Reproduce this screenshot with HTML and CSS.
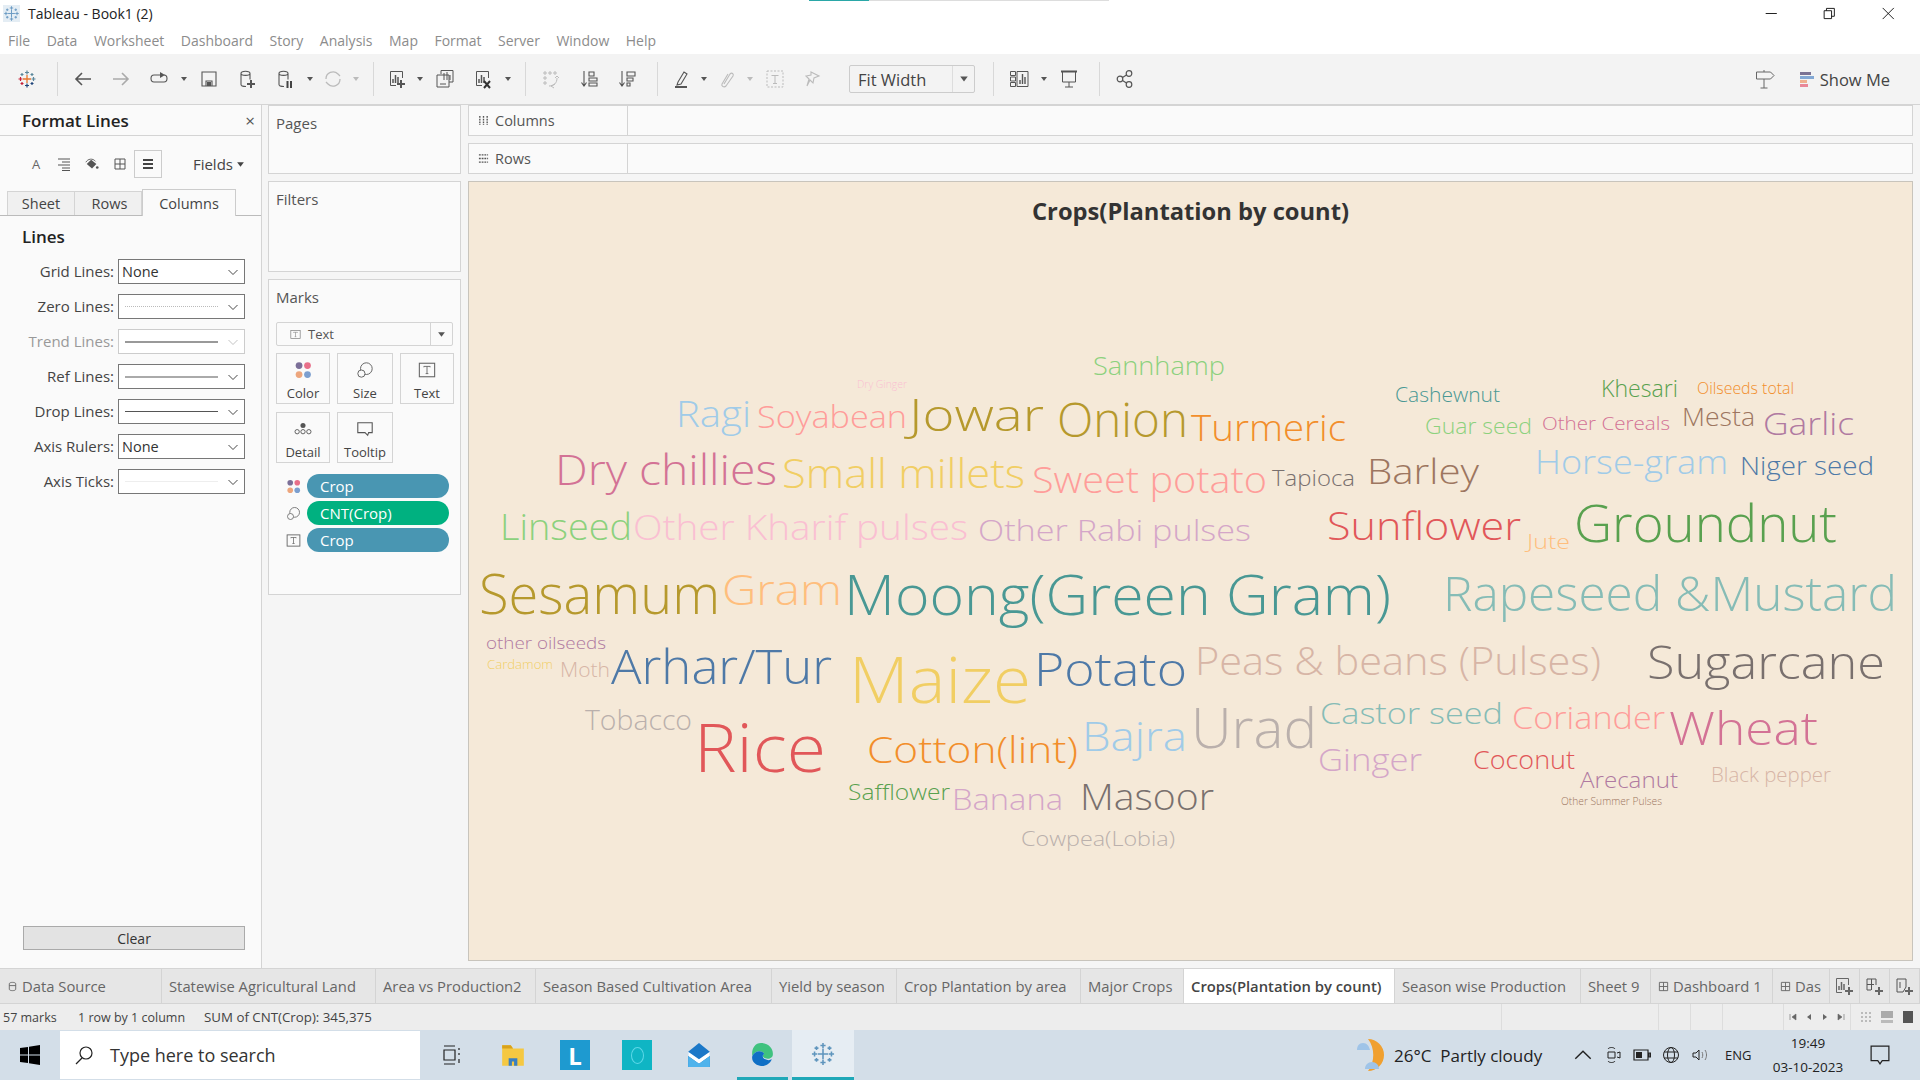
FILE: index.html
```html
<!DOCTYPE html>
<html lang="en">
<head>
  <meta charset="UTF-8" />
  <title>Tableau - Book1 (2)</title>
  <link rel="stylesheet" href="styles.css">
</head>
<body>
  <svg class="defs" width="0" height="0">
    <symbol id="snow" viewBox="0 0 20 20">
      <path d="M10 6v8M6 10h8M10 1.500v4M8 3.500h4M10 14.500v4M8 16.500h4M1.500 10h4M3.500 8v4M14.500 10h4M16.500 8v4M5 4v3M3.500 5.500h3M15 4v3M13.500 5.500h3M5 13v3M3.500 14.500h3M15 13v3M13.500 14.500h3" fill="none" stroke="currentColor" stroke-width="1.200"/>
    </symbol>
    <symbol id="caret" viewBox="0 0 8 8"><path d="M1 2h6L4 6z" fill="currentColor"/></symbol>
    <symbol id="chev" viewBox="0 0 12 8"><path d="M1.500 2l4.500 4.500L10.500 2" fill="none" stroke="currentColor" stroke-width=".9"/></symbol>
    <symbol id="chart" viewBox="0 0 20 20"><path d="M15.500 9V2.500h-12v14H9" fill="none" stroke="currentColor"/><path d="M6 14v-4M8.500 14V6M11 14v-6" fill="none" stroke="currentColor" stroke-width="1.500"/></symbol>
    <symbol id="plus" viewBox="0 0 20 20"><path d="M14 11v8M10 15h8" fill="none" stroke="currentColor" stroke-width="2"/></symbol>
    <symbol id="db" viewBox="0 0 20 20"><path d="M4 4.500c0-3 9-3 9 0v6M4 4.500c0 2.500 9 2.500 9 0M4 4.500v11c0 1.500 2 2 5 2" fill="none" stroke="currentColor" stroke-width="1.100"/></symbol>
    <symbol id="four-dots" viewBox="0 0 16 16">
      <circle cx="4.500" cy="4" r="3" fill="#7b6f98"/><circle cx="12" cy="4" r="3" fill="#e8708a"/>
      <circle cx="4.500" cy="12" r="3" fill="#eda67d"/><circle cx="12" cy="12" r="3" fill="#7c9fcf"/>
    </symbol>
    <symbol id="size" viewBox="0 0 20 20"><circle cx="11.500" cy="8.500" r="6.500" fill="none" stroke="currentColor" stroke-width="1.100"/><circle cx="6" cy="14" r="4" fill="#fafafa" stroke="currentColor" stroke-width="1.100"/></symbol>
    <symbol id="tbox" viewBox="0 0 20 20"><rect x="1.500" y="2.500" width="17" height="15" fill="none" stroke="currentColor" stroke-width="1.200"/><path d="M6.500 7V6h7v1M10 6v8M8.500 14h3" fill="none" stroke="currentColor"/></symbol>
  </svg>

  <div class="progress"></div>

  <div class="title-bar">
    <svg class="app-icon"><use href="#snow"/></svg>
    <span class="app-title">Tableau - Book1 (2)</span>
    <div class="win-ctrls">
      <svg viewBox="0 0 14 14"><path d="M1 7h12" stroke="#111" fill="none"/></svg>
      <svg viewBox="0 0 14 14"><path d="M1.500 4h8v8.500h-8zM4 4V1.500h8.500V10H9.500" stroke="#111" fill="none"/></svg>
      <svg viewBox="0 0 14 14"><path d="M1 1l12 12M13 1L1 13" stroke="#111" fill="none"/></svg>
    </div>
  </div>

  <nav class="menu-bar">
    <span>File</span><span>Data</span><span>Worksheet</span><span>Dashboard</span><span>Story</span><span>Analysis</span><span>Map</span><span>Format</span><span>Server</span><span>Window</span><span>Help</span>
  </nav>

  <div class="toolbar">
    <div class="tool">
      <svg viewBox="0 0 20 20">
        <path d="M10 6v8M6 10h8" stroke="#e8762c" fill="none" stroke-width="1.300"/>
        <path d="M10 1.500v4M8 3.500h4M16.500 8v4M14.500 10h4" stroke="#5b879b" fill="none" stroke-width="1.200"/>
        <path d="M10 14.500v4M8 16.500h4M15 13v3M13.500 14.500h3" stroke="#1f447b" fill="none" stroke-width="1.200"/>
        <path d="M1.500 10h4M3.500 8v4M5 13v3M3.500 14.500h3" stroke="#c72037" fill="none" stroke-width="1.200"/>
        <path d="M5 4v3M3.500 5.500h3M15 4v3M13.500 5.500h3" stroke="#59879b" fill="none" stroke-width="1.200"/>
      </svg>
    </div>
    <i class="sep"></i>
    <div class="tool"><svg viewBox="0 0 20 20"><path d="M18 10H3M9 4l-6 6 6 6" fill="none" stroke="#555" stroke-width="1.600"/></svg></div>
    <div class="tool off"><svg viewBox="0 0 20 20"><path d="M2 10h15M11 4l6 6-6 6" fill="none" stroke="#aaa" stroke-width="1.600"/></svg></div>
    <div class="tool"><svg viewBox="0 0 20 20"><path d="M13 6H5c-4 0-4 7 0 7h10c4 0 4-7 0-7" fill="none" stroke="#555" stroke-width="1.100"/><path d="M11 3l5 3-5 3z" fill="#555"/></svg></div>
    <svg class="caret"><use href="#caret"/></svg>
    <div class="tool"><svg viewBox="0 0 20 20"><path d="M3 3h14v14H3zM7 17v-5h6v5" fill="none" stroke="#555" stroke-width="1.100"/><path d="M8 13h4v4H8z" fill="#555"/></svg></div>
    <div class="tool"><svg><use href="#db"/></svg><svg class="badge"><use href="#plus"/></svg></div>
    <div class="tool"><svg><use href="#db"/></svg><svg class="badge" viewBox="0 0 20 20"><path d="M12.500 12v7M16 12v7" stroke="#444" stroke-width="2" fill="none"/></svg></div>
    <svg class="caret"><use href="#caret"/></svg>
    <div class="tool narrow off"><svg viewBox="0 0 20 20"><path d="M3 10a7 7 0 0 1 12-5l2 2M17 10a7 7 0 0 1-12 5l-2-2" fill="none" stroke="#bbb" stroke-width="1.300"/></svg></div>
    <svg class="caret off"><use href="#caret"/></svg>
    <i class="sep"></i>
    <div class="tool narrow"><svg><use href="#chart"/></svg><svg class="badge"><use href="#plus"/></svg></div>
    <svg class="caret"><use href="#caret"/></svg>
    <div class="tool"><svg viewBox="0 0 20 20"><path d="M6 5V1.500h12V13h-4M2 6h12v12H2z" fill="none" stroke="#555"/><path d="M9 11V4M12 11V3M15 11V6M5 15h6" stroke="#555" fill="none"/></svg></div>
    <div class="tool"><svg><use href="#chart"/></svg><svg class="badge" viewBox="0 0 20 20"><path d="M11 12l6 7M17 12l-6 7" stroke="#333" stroke-width="2" fill="none"/></svg></div>
    <svg class="caret"><use href="#caret"/></svg>
    <i class="sep"></i>
    <div class="tool off"><svg viewBox="0 0 20 20"><path d="M3 3h2v2H3zM8 3h2v2H8zM13 3h2v2h-2zM3 8h2v2H3zM3 13h2v2H3zM8 17c5 0 8-3 8-8M14 15l-4 2 3 2M14 9l2-2 2 2" fill="none" stroke="#bbb"/></svg></div>
    <div class="tool"><svg viewBox="0 0 20 20"><path d="M5 2v14M2.500 13.500L5 17l2.500-3.500M10 3h5v4h-5zM10 9h8v3h-8zM10 14h8v3h-8z" fill="none" stroke="#555" stroke-width="1.100"/></svg></div>
    <div class="tool"><svg viewBox="0 0 20 20"><path d="M5 2v14M2.500 13.500L5 17l2.500-3.500M10 3h8v4h-8zM10 9h6v3h-6zM10 14h3v3h-3z" fill="none" stroke="#555" stroke-width="1.100"/></svg></div>
    <i class="sep"></i>
    <div class="tool narrow"><svg viewBox="0 0 20 20"><path d="M7 13L13 3l3 2-6 10-4 1z" fill="none" stroke="#555" stroke-width="1.100"/><path d="M4 18h12" stroke="#555" stroke-width="2" fill="none"/></svg></div>
    <svg class="caret"><use href="#caret"/></svg>
    <div class="tool narrow off"><svg viewBox="0 0 20 20"><path d="M7 15l6-10c2-2 4 0 3 2l-7 10c-2 2-5 0-4-2l6-10" fill="none" stroke="#bbb" stroke-width="1.100"/></svg></div>
    <svg class="caret off"><use href="#caret"/></svg>
    <div class="tool off"><svg viewBox="0 0 20 20"><rect x="2" y="2" width="16" height="16" fill="none" stroke="#bbb" stroke-dasharray="2 1.500"/><path d="M6.500 6.500h7M10 6.500v8M8 14.500h4" fill="none" stroke="#bbb"/></svg></div>
    <div class="tool off"><svg viewBox="0 0 20 20"><path d="M8 3l8 4-5 2-1 5-3-3-3 6 2-7-3-3 5-1z" fill="none" stroke="#bbb" stroke-width="1.100"/></svg></div>
    <div class="fit-box"><span class="fit-text">Fit Width</span><span class="fit-arrow"><svg><use href="#caret"/></svg></span></div>
    <i class="sep"></i>
    <div class="tool"><svg viewBox="0 0 20 20"><path d="M1.500 2.500h5v4h-5zM1.500 8h5v4h-5zM1.500 13.500h5v4h-5zM8 2.500h11v15H8z" fill="none" stroke="#555"/><path d="M11 15v-4M13.500 15V5M16 15V8" fill="none" stroke="#555" stroke-width="1.400"/></svg></div>
    <svg class="caret"><use href="#caret"/></svg>
    <div class="tool"><svg viewBox="0 0 20 20"><path d="M2 2.500h16" stroke="#555" stroke-width="2" fill="none"/><path d="M3.500 3v10h13V3M10 13v5M6 18h8" stroke="#555" fill="none"/></svg></div>
    <i class="sep"></i>
    <div class="tool"><svg viewBox="0 0 20 20"><circle cx="14" cy="4.500" r="2.800" fill="none" stroke="#555" stroke-width="1.200"/><circle cx="5" cy="10" r="2.800" fill="none" stroke="#555" stroke-width="1.200"/><circle cx="14" cy="15.500" r="2.800" fill="none" stroke="#555" stroke-width="1.200"/><path d="M7.500 8.500l4-2.500M7.500 11.500l4 2.500" stroke="#555" fill="none" stroke-width="1.200"/></svg></div>
    <div class="tool push"><svg viewBox="0 0 20 20"><path d="M1.500 3h14l3.500 3.500-3.500 3.500h-14zM9 3V1M9 10v9M5.500 19h7" fill="none" stroke="#666"/></svg></div>
    <div class="show-me">
      <span class="bars"><i class="b1"></i><i class="b2"></i><i class="b3"></i><i class="b4"></i></span>
      Show Me
    </div>
  </div>

  <main class="workspace">
    <section class="format-pane">
      <header class="pane-head"><span>Format Lines</span><span class="close">×</span></header>
      <div class="fmt-icons">
        <span class="fmt-icon"><span class="fmt-a">A</span></span>
        <span class="fmt-icon"><svg viewBox="0 0 14 14"><path d="M1 2h12M5 5h8M1 8h12M5 11h8M5 13.500h8" stroke="#555" fill="none"/></svg></span>
        <span class="fmt-icon"><svg viewBox="0 0 16 14"><path d="M2 7l5-5 6 5-5 5z" fill="#555"/><path d="M1 5c2-4 8-5 11-1" fill="none" stroke="#555"/><circle cx="14" cy="11" r="1.500" fill="#555"/></svg></span>
        <span class="fmt-icon"><svg viewBox="0 0 14 14"><path d="M2 2h10v10H2zM7 2v10M2 7h10" fill="none" stroke="#555"/></svg></span>
        <span class="fmt-icon selected"><svg viewBox="0 0 14 14"><path d="M2 3h10M2 7h10M2 11h10" stroke="#444" stroke-width="2" fill="none"/></svg></span>
        <span class="fields">Fields <svg><use href="#caret"/></svg></span>
      </div>
      <div class="fmt-tabs">
        <span class="fmt-tab tab-sheet">Sheet</span>
        <span class="fmt-tab tab-rows">Rows</span>
        <span class="fmt-tab tab-cols">Columns</span>
      </div>
      <h3 class="lines-title">Lines</h3>
      <div class="fmt-row"><label>Grid Lines:</label><div class="fmt-select">None<svg><use href="#chev"/></svg></div></div>
      <div class="fmt-row"><label>Zero Lines:</label><div class="fmt-select"><i class="line dotted"></i><svg><use href="#chev"/></svg></div></div>
      <div class="fmt-row disabled"><label>Trend Lines:</label><div class="fmt-select"><i class="line thick"></i><svg><use href="#chev"/></svg></div></div>
      <div class="fmt-row"><label>Ref Lines:</label><div class="fmt-select"><i class="line thick light"></i><svg><use href="#chev"/></svg></div></div>
      <div class="fmt-row"><label>Drop Lines:</label><div class="fmt-select"><i class="line"></i><svg><use href="#chev"/></svg></div></div>
      <div class="fmt-row"><label>Axis Rulers:</label><div class="fmt-select">None<svg><use href="#chev"/></svg></div></div>
      <div class="fmt-row"><label>Axis Ticks:</label><div class="fmt-select"><i class="line faint"></i><svg><use href="#chev"/></svg></div></div>
      <button class="clear-btn">Clear</button>
    </section>

    <section class="cards">
      <div class="card pages"><div class="card-title">Pages</div></div>
      <div class="card filters"><div class="card-title">Filters</div></div>
      <div class="card marks">
        <div class="card-title">Marks</div>
        <div class="mark-type">
          <svg class="mark-type-icon"><use href="#tbox"/></svg>
          <span>Text</span>
          <span class="mark-type-arrow"><svg><use href="#caret"/></svg></span>
        </div>
        <div class="mark-grid">
          <div class="mark-btn"><svg><use href="#four-dots"/></svg>Color</div>
          <div class="mark-btn"><svg><use href="#size"/></svg>Size</div>
          <div class="mark-btn"><svg><use href="#tbox"/></svg>Text</div>
          <div class="mark-btn"><svg viewBox="0 0 20 20"><circle cx="10" cy="6" r="2.800" fill="#555"/><circle cx="3.500" cy="13" r="2.400" fill="none" stroke="#555"/><circle cx="10" cy="13" r="2.400" fill="none" stroke="#555"/><circle cx="16.500" cy="13" r="2.400" fill="none" stroke="#555"/></svg>Detail</div>
          <div class="mark-btn"><svg viewBox="0 0 20 20"><path d="M2 3h16v11h-4l-1 3-3-3H2z" fill="none" stroke="#555" stroke-width="1.200"/></svg>Tooltip</div>
        </div>
        <div class="pill-row"><svg><use href="#four-dots"/></svg><span class="pill">Crop</span></div>
        <div class="pill-row"><svg><use href="#size"/></svg><span class="pill green">CNT(Crop)</span></div>
        <div class="pill-row"><svg><use href="#tbox"/></svg><span class="pill">Crop</span></div>
      </div>
    </section>

    <section class="view">
      <div class="shelf">
        <div class="shelf-label"><svg viewBox="0 0 12 12"><path d="M2 1v10M6 1v10M10 1v10" stroke="#555" stroke-width="1.500" stroke-dasharray="2 1" fill="none"/></svg>Columns</div>
        <div class="shelf-drop"></div>
      </div>
      <div class="shelf">
        <div class="shelf-label"><svg viewBox="0 0 12 12"><path d="M1 2h10M1 6h10M1 10h10" stroke="#555" stroke-width="1.500" stroke-dasharray="2 1" fill="none"/></svg>Rows</div>
        <div class="shelf-drop"></div>
      </div>
      <div class="canvas">
        <svg class="cloud" viewBox="469 182 1443 778">
          <text class="cloud-title" x="1032" y="220" font-size="23" textLength="317" lengthAdjust="spacingAndGlyphs">Crops(Plantation by count)</text>

          <g class="words">
          <text class="c-lgreen" x="1093" y="375" font-size="26" textLength="132" lengthAdjust="spacingAndGlyphs">Sannhamp</text>
          <text class="c-pink" x="857" y="388" font-size="10" textLength="50" lengthAdjust="spacingAndGlyphs">Dry Ginger</text>
          <text class="c-lblue" x="676" y="427" font-size="37" textLength="75" lengthAdjust="spacingAndGlyphs">Ragi</text>
          <text class="c-salmon" x="757" y="428" font-size="32" textLength="150" lengthAdjust="spacingAndGlyphs">Soyabean</text>
          <text class="c-gold" x="909" y="431" font-size="45" textLength="135" lengthAdjust="spacingAndGlyphs">Jowar</text>
          <text class="c-gold" x="1057" y="437" font-size="47" textLength="131" lengthAdjust="spacingAndGlyphs">Onion</text>
          <text class="c-orange" x="1191" y="441" font-size="36" textLength="155" lengthAdjust="spacingAndGlyphs">Turmeric</text>
          <text class="c-teal" x="1395" y="402" font-size="20" textLength="105" lengthAdjust="spacingAndGlyphs">Cashewnut</text>
          <text class="c-green" x="1601" y="397" font-size="23" textLength="77" lengthAdjust="spacingAndGlyphs">Khesari</text>
          <text class="c-orange" x="1697" y="394" font-size="16" textLength="97" lengthAdjust="spacingAndGlyphs">Oilseeds total</text>
          <text class="c-lgreen" x="1425" y="434" font-size="22" textLength="107" lengthAdjust="spacingAndGlyphs">Guar seed</text>
          <text class="c-rose" x="1542" y="430" font-size="19" textLength="128" lengthAdjust="spacingAndGlyphs">Other Cereals</text>
          <text class="c-brown" x="1682" y="426" font-size="25" textLength="73" lengthAdjust="spacingAndGlyphs">Mesta</text>
          <text class="c-purple" x="1763" y="435" font-size="31" textLength="91" lengthAdjust="spacingAndGlyphs">Garlic</text>

          <text class="c-rose" x="555" y="485" font-size="42" textLength="222" lengthAdjust="spacingAndGlyphs">Dry chillies</text>
          <text class="c-yellow" x="782" y="488" font-size="40" textLength="243" lengthAdjust="spacingAndGlyphs">Small millets</text>
          <text class="c-salmon" x="1032" y="493" font-size="36" textLength="235" lengthAdjust="spacingAndGlyphs">Sweet potato</text>
          <text class="c-grey" x="1272" y="486" font-size="22" textLength="83" lengthAdjust="spacingAndGlyphs">Tapioca</text>
          <text class="c-brown" x="1367" y="484" font-size="35" textLength="112" lengthAdjust="spacingAndGlyphs">Barley</text>
          <text class="c-lblue" x="1535" y="474" font-size="33" textLength="193" lengthAdjust="spacingAndGlyphs">Horse-gram</text>
          <text class="c-blue" x="1740" y="475" font-size="26" textLength="134" lengthAdjust="spacingAndGlyphs">Niger seed</text>

          <text class="c-lgreen" x="500" y="540" font-size="37" textLength="132" lengthAdjust="spacingAndGlyphs">Linseed</text>
          <text class="c-pink" x="633" y="540" font-size="35" textLength="335" lengthAdjust="spacingAndGlyphs">Other Kharif pulses</text>
          <text class="c-mauve" x="978" y="541" font-size="29" textLength="273" lengthAdjust="spacingAndGlyphs">Other Rabi pulses</text>
          <text class="c-red" x="1327" y="540" font-size="38" textLength="194" lengthAdjust="spacingAndGlyphs">Sunflower</text>
          <text class="c-peach" x="1527" y="549" font-size="21" textLength="43" lengthAdjust="spacingAndGlyphs">Jute</text>
          <text class="c-green" x="1574" y="542" font-size="52" textLength="263" lengthAdjust="spacingAndGlyphs">Groundnut</text>

          <text class="c-gold" x="479" y="614" font-size="55" textLength="241" lengthAdjust="spacingAndGlyphs">Sesamum</text>
          <text class="c-peach" x="722" y="605" font-size="43" textLength="120" lengthAdjust="spacingAndGlyphs">Gram</text>
          <text class="c-teal" x="844" y="615" font-size="56" textLength="547" lengthAdjust="spacingAndGlyphs">Moong(Green Gram)</text>
          <text class="c-lteal" x="1443" y="611" font-size="47" textLength="454" lengthAdjust="spacingAndGlyphs">Rapeseed &amp;Mustard</text>

          <text class="c-purple" x="486" y="649" font-size="17" textLength="120" lengthAdjust="spacingAndGlyphs">other oilseeds</text>
          <text class="c-yellow" x="487" y="669" font-size="12" textLength="66" lengthAdjust="spacingAndGlyphs">Cardamom</text>
          <text class="c-tan" x="560" y="677" font-size="20" textLength="50" lengthAdjust="spacingAndGlyphs">Moth</text>
          <text class="c-blue" x="611" y="684" font-size="47" textLength="221" lengthAdjust="spacingAndGlyphs">Arhar/Tur</text>
          <text class="c-yellow" x="849" y="703" font-size="64" textLength="182" lengthAdjust="spacingAndGlyphs">Maize</text>
          <text class="c-blue" x="1034" y="686" font-size="46" textLength="153" lengthAdjust="spacingAndGlyphs">Potato</text>
          <text class="c-tan" x="1195" y="675" font-size="38" textLength="406" lengthAdjust="spacingAndGlyphs">Peas &amp; beans (Pulses)</text>
          <text class="c-grey" x="1647" y="679" font-size="46" textLength="238" lengthAdjust="spacingAndGlyphs">Sugarcane</text>

          <text class="c-silver" x="585" y="730" font-size="28" textLength="107" lengthAdjust="spacingAndGlyphs">Tobacco</text>
          <text class="c-red" x="694" y="772" font-size="66" textLength="132" lengthAdjust="spacingAndGlyphs">Rice</text>
          <text class="c-orange" x="867" y="763" font-size="36" textLength="211" lengthAdjust="spacingAndGlyphs">Cotton(lint)</text>
          <text class="c-lblue" x="1082" y="751" font-size="41" textLength="105" lengthAdjust="spacingAndGlyphs">Bajra</text>
          <text class="c-silver" x="1191" y="748" font-size="56" textLength="126" lengthAdjust="spacingAndGlyphs">Urad</text>
          <text class="c-lteal" x="1320" y="724" font-size="30" textLength="183" lengthAdjust="spacingAndGlyphs">Castor seed</text>
          <text class="c-salmon" x="1512" y="729" font-size="31" textLength="153" lengthAdjust="spacingAndGlyphs">Coriander</text>
          <text class="c-rose" x="1669" y="745" font-size="46" textLength="149" lengthAdjust="spacingAndGlyphs">Wheat</text>

          <text class="c-mauve" x="1318" y="771" font-size="31" textLength="104" lengthAdjust="spacingAndGlyphs">Ginger</text>
          <text class="c-red" x="1473" y="769" font-size="25" textLength="102" lengthAdjust="spacingAndGlyphs">Coconut</text>
          <text class="c-purple" x="1580" y="788" font-size="22" textLength="98" lengthAdjust="spacingAndGlyphs">Arecanut</text>
          <text class="c-tan" x="1711" y="782" font-size="20" textLength="120" lengthAdjust="spacingAndGlyphs">Black pepper</text>
          <text class="c-brown" x="1561" y="805" font-size="10" textLength="101" lengthAdjust="spacingAndGlyphs">Other Summer Pulses</text>
          <text class="c-green" x="848" y="800" font-size="22" textLength="102" lengthAdjust="spacingAndGlyphs">Safflower</text>
          <text class="c-mauve" x="952" y="810" font-size="30" textLength="111" lengthAdjust="spacingAndGlyphs">Banana</text>
          <text class="c-grey" x="1080" y="810" font-size="37" textLength="134" lengthAdjust="spacingAndGlyphs">Masoor</text>
          <text class="c-silver" x="1021" y="846" font-size="21" textLength="154" lengthAdjust="spacingAndGlyphs">Cowpea(Lobia)</text>
          </g>
        </svg>
      </div>
    </section>
  </main>

  <div class="sheet-tabs">
    <span class="tab"><svg class="tab-icon" viewBox="0 0 10 12"><path d="M1.500 3c0-2 7-2 7 0v6c0 2-7 2-7 0zM1.500 5h7" fill="none" stroke="#666"/></svg>Data Source</span>
    <span class="tab">Statewise Agricultural Land</span>
    <span class="tab">Area vs Production2</span>
    <span class="tab">Season Based Cultivation Area</span>
    <span class="tab">Yield by season</span>
    <span class="tab">Crop Plantation by area</span>
    <span class="tab">Major Crops</span>
    <span class="tab active">Crops(Plantation by count)</span>
    <span class="tab">Season wise Production</span>
    <span class="tab">Sheet 9</span>
    <span class="tab"><svg class="tab-icon" viewBox="0 0 12 12"><path d="M1.500 1.500h9v9h-9zM6 1.500v9M1.500 6h9" fill="none" stroke="#666"/></svg>Dashboard 1</span>
    <span class="tab clipped"><svg class="tab-icon" viewBox="0 0 12 12"><path d="M1.500 1.500h9v9h-9zM6 1.500v9M1.500 6h9" fill="none" stroke="#666"/></svg>Das</span>
    <span class="tab new"><svg><use href="#chart"/></svg><svg class="badge"><use href="#plus"/></svg></span>
    <span class="tab new"><svg viewBox="0 0 20 20"><path d="M4 3h9v6M8.500 3v11M4 8.500h7M4 3v11h4" fill="none" stroke="#555"/></svg><svg class="badge"><use href="#plus"/></svg></span>
    <span class="tab new"><svg viewBox="0 0 20 20"><path d="M4 3h9v8l-3 5H4z" fill="none" stroke="#555"/><path d="M7 6v6" stroke="#555" fill="none"/></svg><svg class="badge"><use href="#plus"/></svg></span>
  </div>

  <div class="status-bar">
    <span class="st-marks">57 marks</span>
    <span class="st-dims">1 row by 1 column</span>
    <span class="st-sum">SUM of CNT(Crop): 345,375</span>
    <div class="st-cells">
      <i class="st-cell w157"></i><i class="st-cell w32"></i><i class="st-cell w32"></i><i class="st-cell w61"></i>
      <div class="st-nav">
        <svg viewBox="0 0 8 8"><path d="M1 1v6M7 1L3 4l4 3z" fill="#666" stroke="#666" stroke-width=".6"/></svg>
        <svg viewBox="0 0 8 8"><path d="M6 1L2 4l4 3z" fill="#666"/></svg>
        <svg viewBox="0 0 8 8"><path d="M2 1l4 3-4 3z" fill="#666"/></svg>
        <svg viewBox="0 0 8 8"><path d="M7 1v6M1 1l4 3-4 3z" fill="#666" stroke="#666" stroke-width=".6"/></svg>
      </div>
      <div class="st-views">
        <svg viewBox="0 0 12 12"><path d="M1 1h2v2H1zM5 1h2v2H5zM9 1h2v2H9zM1 5h2v2H1zM5 5h2v2H5zM9 5h2v2H9zM1 9h2v2H1zM5 9h2v2H5zM9 9h2v2H9z" fill="#bbb"/></svg>
        <svg viewBox="0 0 12 12"><path d="M0 0h12v7H0z" fill="#aaa"/><path d="M0 9h12v3H0z" fill="#bbb"/></svg>
        <svg viewBox="0 0 12 12"><path d="M1 0h10v12H1z" fill="#555"/></svg>
      </div>
    </div>
  </div>

  <footer class="taskbar">
    <div class="start"><svg viewBox="0 0 20 20"><path d="M0 3l8-1v7.500H0zM9 1.800L20 0v9.500H9zM0 10.500h8V18l-8-1zM9 10.500h11V20L9 18.200z" fill="#000"/></svg></div>
    <div class="search">
      <svg viewBox="0 0 20 20"><circle cx="12" cy="8" r="6" fill="none" stroke="#222" stroke-width="1.200"/><path d="M8 13l-6 6" stroke="#222" stroke-width="1.200" fill="none"/></svg>
      <span>Type here to search</span>
    </div>
    <div class="task-item view-btn"><svg viewBox="0 0 20 20"><path d="M3 1h11M3 19h11M3 5h11v10H3zM18 3v2M18 8v2M18 14v4" fill="none" stroke="#222" stroke-width="1.200"/></svg></div>
    <div class="task-item"><svg viewBox="0 0 24 24"><path d="M2 3h8l2 3h10v16H2z" fill="#f5c842"/><path d="M2 3h8l2 3H2z" fill="#d9a21b"/><path d="M8 22v-7h8v7h-3v-4h-2v4z" fill="#3a7fc1"/></svg></div>
    <div class="task-item"><span class="app-l">L</span></div>
    <div class="task-item"><span class="app-o"></span></div>
    <div class="task-item"><svg viewBox="0 0 24 24"><path d="M2 9L12 1l10 8v14H2z" fill="#1b78c8"/><path d="M2 9l10 7 10-7v4L12 20 2 13z" fill="#fff"/><path d="M2 13l10 7 10-7v10H2z" fill="#4fb3ec"/></svg></div>
    <div class="task-item edge">
      <svg viewBox="0 0 24 24"><path d="M12 1c7 0 11 5 11 10 0 4-4 5-7 4-3-1-3-3-1-4-2-4-9-3-11 2C3 7 6 1 12 1z" fill="#3fc27f"/><path d="M4 13c2-5 9-6 11-2-2 1-2 4 1 5 2 1 4 1 6 0-2 5-7 7-11 6-5-1-8-5-7-9z" fill="#0f6fc5"/></svg>
    </div>
    <div class="task-item active"><svg class="task-snow"><use href="#snow"/></svg></div>

    <div class="tray">
      <svg class="weather" viewBox="0 0 30 38"><path d="M14 3a16 16 0 0 1 0 32c7-9 7-23 0-32z" fill="#f0a030"/><path d="M3 14c0-4 2-7 6-7s6 3 7 7zM11 33c0-4 3-7 7-7s7 3 7 7z" fill="#9fc4e8"/></svg>
      <span class="weather-text">26°C&nbsp; Partly cloudy</span>
      <span class="tray-ico chevron"><svg viewBox="0 0 14 10"><path d="M1 8l6-6 6 6" fill="none" stroke="#222" stroke-width="1.100"/></svg></span>
      <span class="tray-ico"><svg viewBox="0 0 16 18"><path d="M3 3c1-2 6-2 7 0M3 15c1 2 6 2 7 0M3 6h7v6H3zM12 7l3-1v6l-3-1" fill="none" stroke="#222"/></svg></span>
      <span class="tray-ico"><svg viewBox="0 0 18 12"><path d="M1 1h14v10H1zM16 4h1.500v4H16z" fill="none" stroke="#222" stroke-width="1.200"/><path d="M3 3h6v6H3z" fill="#222"/></svg></span>
      <span class="tray-ico"><svg viewBox="0 0 18 18"><circle cx="9" cy="9" r="7.500" fill="none" stroke="#222"/><ellipse cx="9" cy="9" rx="3.500" ry="7.500" fill="none" stroke="#222"/><path d="M2 6h14M2 12h14" stroke="#222" fill="none"/></svg></span>
      <span class="tray-ico"><svg viewBox="0 0 18 16"><path d="M2 6h3l3-3v10l-3-3H2z" fill="none" stroke="#222"/><path d="M11 5c1 2 1 4 0 6M14 3c2 3 2 7 0 10" fill="none" stroke="#777"/></svg></span>
      <span class="lang">ENG</span>
      <div class="clock"><span>19:49</span><span>03-10-2023</span></div>
      <span class="notif"><svg viewBox="0 0 18 18"><path d="M1 1h16v13h-6l-2 3-2-3H1z" fill="none" stroke="#222" stroke-width="1.100"/></svg></span>
    </div>
  </footer>
</body>
</html>
```

FILE: styles.css
```css
:root {
  --line: #d4d4d4;
  --panel: #fafafa;
  --muted: #666;
  --pill-blue: #4996b2;
  --pill-green: #00b180;
}

* {
  box-sizing: border-box;
}

html, body {
  margin: 0;
  height: 100%;
}

body {
  width: 1920px;
  height: 1080px;
  display: flex;
  flex-direction: column;
  overflow: hidden;
  position: relative;
  font-family: "Open Sans", "Liberation Sans", sans-serif;
  font-size: 14px;
  color: #444;
  background: #f5f5f5;
}

.defs {
  position: absolute;
}

/* little loading line at the very top */
.progress {
  position: absolute;
  top: 0;
  left: 809px;
  width: 300px;
  height: 1px;
  background: linear-gradient(90deg, #2aa7a7 0 60px, #ddd 60px);
}

.title-bar {
  height: 27px;
  flex: none;
  display: flex;
  align-items: center;
  background: #fff;
  padding-left: 3px;
}

.app-icon {
  width: 17px;
  height: 17px;
  color: #6d9cc4;
  background: #e4edf4;
  margin-right: 8px;
}

.app-title {
  font-size: 14px;
  color: #222;
}

.win-ctrls {
  margin-left: auto;
  padding-right: 3px;
  display: flex;
}

.win-ctrls svg {
  width: 58.500px;
  height: 13px;
}

.menu-bar {
  height: 27px;
  flex: none;
  display: flex;
  align-items: center;
  gap: 16.500px;
  padding-left: 8px;
  background: #fff;
  color: #8c8c8c;
  font-size: 14px;
}

.toolbar {
  height: 51px;
  flex: none;
  display: flex;
  align-items: center;
  padding: 0 30px 0 8px;
  background: #f3f3f3;
  border-bottom: 1px solid var(--line);
}

.tool {
  width: 38px;
  height: 24px;
  flex: none;
  position: relative;
  display: flex;
  justify-content: center;
  align-items: center;
  color: #555;
}

.tool.narrow {
  width: 34px;
}

.tool svg {
  width: 20px;
  height: 20px;
}

.tool svg.badge {
  position: absolute;
  left: 9px;
  top: 2px;
}

.tool.narrow svg.badge {
  left: 7px;
}

.tool.push {
  margin-left: auto;
}

.caret {
  width: 12px;
  height: 8px;
  flex: none;
  color: #555;
}

.caret.off {
  color: #bbb;
}

.sep {
  width: 1px;
  height: 34px;
  flex: none;
  margin: 0 6px 0 11px;
  background: #d8d8d8;
}

.fit-box {
  width: 126px;
  height: 28px;
  flex: none;
  margin: 0 7px 0 17px;
  display: flex;
  align-items: center;
  border: 1px solid #ccc;
  border-radius: 2px;
  font-size: 16.500px;
  color: #444;
}

.fit-text {
  flex: 1;
  padding-left: 8px;
}

.fit-arrow {
  width: 22px;
  height: 100%;
  display: flex;
  align-items: center;
  justify-content: center;
  border-left: 1px solid #ddd;
}

.fit-arrow svg {
  width: 10px;
  height: 10px;
  color: #555;
}

.show-me {
  margin-left: 16px;
  display: flex;
  align-items: center;
  gap: 6px;
  font-size: 16.500px;
  color: #444;
}

.bars {
  width: 14px;
  display: flex;
  flex-direction: column;
  gap: 1px;
}

.bars i {
  height: 3px;
  display: block;
}

.b1 { width: 11px; background: #7b7394; }
.b2 { width: 14px; background: #83a8d4; }
.b3 { width: 7px; background: #efb08e; }
.b4 { width: 8px; background: #e98797; }

.workspace {
  height: 863px;
  flex: none;
  display: flex;
}

/* format pane */
.format-pane {
  width: 262px;
  flex: none;
  display: flex;
  flex-direction: column;
  background: var(--panel);
  border-right: 1px solid var(--line);
}

.pane-head {
  height: 31px;
  flex: none;
  display: flex;
  align-items: center;
  justify-content: space-between;
  padding: 0 6px 0 22px;
  border-bottom: 1px solid var(--line);
  font-size: 17px;
  font-weight: 600;
  color: #222;
}

.close {
  font-size: 17px;
  font-weight: 400;
  color: #555;
}

.fmt-icons {
  height: 56px;
  flex: none;
  display: flex;
  align-items: center;
  padding: 0 16px 0 22px;
}

.fmt-icon {
  width: 28px;
  height: 28px;
  display: flex;
  align-items: center;
  justify-content: center;
}

.fmt-icon svg {
  width: 14px;
  height: 14px;
}

.fmt-icon.selected {
  border: 1px solid #ccc;
}

.fmt-a {
  font-size: 13px;
  color: #666;
}

.fields {
  margin-left: auto;
  display: flex;
  align-items: center;
  gap: 3px;
  font-size: 15px;
  color: #444;
}

.fields svg {
  width: 9px;
  height: 9px;
}

.fmt-tabs {
  height: 24px;
  flex: none;
  display: flex;
  align-items: flex-end;
  padding-left: 7px;
  border-bottom: 1px solid #bbb;
}

.fmt-tab {
  height: 24px;
  display: flex;
  align-items: center;
  justify-content: center;
  background: #f0f0f0;
  border: 1px solid var(--line);
  border-bottom: 0;
  font-size: 14.500px;
}

.tab-sheet { width: 68px; }
.tab-rows { width: 67px; border-left: 0; padding-left: 3px; }

.tab-cols {
  width: 94px;
  height: 27px;
  margin-bottom: -1px;
  background: var(--panel);
  border-color: #ccc;
}

.lines-title {
  height: 41px;
  flex: none;
  margin: 0 0 2px;
  padding-left: 22px;
  display: flex;
  align-items: center;
  font-size: 17px;
  font-weight: 600;
  color: #222;
}

.fmt-row {
  height: 25px;
  flex: none;
  margin-bottom: 10px;
  display: flex;
  gap: 4px;
  align-items: center;
}

.fmt-row label {
  width: 114px;
  padding-bottom: 2px;
  text-align: right;
  font-size: 15px;
}

.fmt-select {
  width: 127px;
  height: 25px;
  padding: 0 5px 0 3px;
  display: flex;
  align-items: center;
  justify-content: space-between;
  background: #fff;
  border: 1px solid #777;
  font-size: 14.500px;
  color: #333;
}

.fmt-select svg {
  width: 12px;
  height: 8px;
  margin-left: auto;
  flex: none;
}

.line {
  width: 93px;
  margin-left: 3px;
  display: block;
  border-top: 1px solid #555;
}

.line.thick {
  border-top: 2px solid #999;
}

.line.light {
  border-top-color: #aaa;
}

.line.dotted {
  border-top: 1px dotted #bbb;
}

.line.faint {
  border-top: 1px solid #eee;
}

.fmt-row.disabled label {
  color: #999;
}

.fmt-row.disabled .fmt-select {
  border-color: #ccc;
  color: #bbb;
}

.clear-btn {
  width: 222px;
  height: 24px;
  margin: auto 0 18px 23px;
  font-family: inherit;
  font-size: 14px;
  color: #333;
  background: #e3e3e3;
  border: 1px solid #aaa;
}

/* pages, filters, marks */
.cards {
  width: 193px;
  flex: none;
  margin-left: 6px;
  display: flex;
  flex-direction: column;
  gap: 7px;
}

.card {
  padding: 7px 7px 0;
  background: var(--panel);
  border: 1px solid var(--line);
}

.card-title {
  height: 20px;
  line-height: 20px;
  font-size: 15px;
  color: #555;
}

.pages { height: 69px; }
.filters { height: 91px; }
.marks { height: 316px; }

.mark-type {
  height: 24px;
  margin-top: 15px;
  display: flex;
  align-items: center;
  padding-left: 13px;
  border: 1px solid var(--line);
  border-radius: 2px;
  font-size: 13px;
  color: #555;
}

.mark-type-icon {
  width: 11px;
  height: 11px;
  margin-right: 7px;
  color: #777;
}

.mark-type-arrow {
  width: 22px;
  height: 100%;
  margin-left: auto;
  display: flex;
  align-items: center;
  justify-content: center;
  border-left: 1px solid var(--line);
}

.mark-type-arrow svg {
  width: 9px;
  height: 9px;
}

.mark-grid {
  margin-top: 7px;
  display: grid;
  grid-template-columns: 54px 56px 54px;
  grid-auto-rows: 51px;
  column-gap: 7px;
  row-gap: 8px;
}

.mark-btn {
  display: flex;
  flex-direction: column;
  align-items: center;
  justify-content: flex-end;
  padding-bottom: 1px;
  gap: 5px;
  border: 1px solid var(--line);
  font-size: 13px;
  color: #444;
}

.mark-btn svg {
  width: 18px;
  height: 18px;
  color: #666;
}

.pill-row {
  height: 24px;
  margin-bottom: 3px;
  display: flex;
  align-items: center;
}

.marks .mark-grid + .pill-row {
  margin-top: 11px;
}

.pill-row svg {
  width: 15px;
  height: 15px;
  margin: 0 6px 0 10px;
  flex: none;
  color: #666;
}

.pill {
  width: 142px;
  height: 24px;
  padding-left: 13px;
  line-height: 24px;
  border-radius: 12px;
  font-size: 15px;
  color: #fff;
  background: var(--pill-blue);
}

.pill.green {
  background: var(--pill-green);
}

/* worksheet */
.view {
  width: 1445px;
  flex: none;
  margin-left: 7px;
}

.shelf {
  height: 31px;
  margin-bottom: 7px;
  display: flex;
  background: var(--panel);
  border: 1px solid var(--line);
}

.shelf-label {
  width: 159px;
  flex: none;
  display: flex;
  align-items: center;
  gap: 6px;
  padding-left: 9px;
  font-size: 14.500px;
  color: #555;
  border-right: 1px solid var(--line);
}

.shelf-label svg {
  width: 11px;
  height: 11px;
}

.canvas {
  width: 1445px;
  height: 780px;
  background: #f5e9d8;
  border: 1px solid #c8c4bc;
}

.cloud {
  width: 1443px;
  height: 778px;
  display: block;
  font-family: "Open Sans", "Liberation Sans", sans-serif;
}

.cloud-title {
  font-weight: 700;
  fill: #333;
}

.words {
  font-weight: 300;
}

.c-gold { fill: #b6992d; }
.c-teal { fill: #499894; }
.c-lteal { fill: #86bcb6; }
.c-red { fill: #e15759; }
.c-yellow { fill: #f1ce63; }
.c-blue { fill: #4e79a7; }
.c-lblue { fill: #a0cbe8; }
.c-green { fill: #59a14f; }
.c-lgreen { fill: #8cd17d; }
.c-grey { fill: #79706e; }
.c-silver { fill: #bab0ac; }
.c-orange { fill: #f28e2b; }
.c-peach { fill: #ffbe7d; }
.c-rose { fill: #d37295; }
.c-pink { fill: #fabfd2; }
.c-salmon { fill: #ff9d9a; }
.c-mauve { fill: #d4a6c8; }
.c-purple { fill: #b07aa1; }
.c-brown { fill: #9d7660; }
.c-tan { fill: #d7b5a6; }

/* bottom bars */
.sheet-tabs {
  height: 36px;
  flex: none;
  display: grid;
  grid-template-columns: 162px 214px 160px 236px 125px 184px 103px 211px 186px 70px 122px 57px 30px 30px 30px;
  background: #e6e6e6;
  border-top: 1px solid var(--line);
  border-bottom: 1px solid var(--line);
}

.tab {
  display: flex;
  align-items: center;
  position: relative;
  padding-left: 7px;
  white-space: nowrap;
  overflow: hidden;
  font-size: 14.800px;
  color: #666;
  border-right: 1px solid var(--line);
}

.tab.active {
  background: #fff;
  font-weight: 600;
  color: #444;
}

.tab-icon {
  width: 11px;
  height: 11px;
  margin-right: 4px;
  flex: none;
}

.tab.new {
  padding-left: 3px;
}

.tab.new svg {
  width: 20px;
  height: 20px;
  flex: none;
}

.tab.new svg.badge {
  position: absolute;
  left: 5px;
  top: 7px;
}

.status-bar {
  height: 26px;
  flex: none;
  display: flex;
  align-items: center;
  padding-left: 3px;
  font-size: 12.500px;
  color: #444;
  background: #ededed;
}

.st-marks { width: 75px; }
.st-dims { width: 126px; }
.st-sum { font-size: 13.300px; }

.st-cells {
  margin-left: auto;
  height: 100%;
  display: flex;
}

.st-cell {
  display: block;
  border-left: 1px solid #ddd;
}

.w157 { width: 157px; }
.w32 { width: 32px; }
.w61 { width: 61px; }

.st-nav {
  width: 67px;
  display: flex;
  align-items: center;
  padding-left: 5px;
  gap: 8px;
  border-left: 1px solid #ddd;
}

.st-nav svg {
  width: 8px;
  height: 8px;
}

.st-views {
  width: 70px;
  display: flex;
  align-items: center;
  padding-left: 9px;
  gap: 9px;
  border-left: 1px solid #ddd;
}

.st-views svg {
  width: 12px;
  height: 12px;
}

.taskbar {
  height: 50px;
  flex: none;
  display: flex;
  align-items: center;
  background: #d3dee8;
}

.start {
  width: 60px;
  height: 100%;
  display: flex;
  align-items: center;
  padding-left: 20px;
}

.start svg {
  width: 20px;
  height: 20px;
}

.search {
  width: 360px;
  height: 48px;
  flex: none;
  display: flex;
  align-items: center;
  gap: 16px;
  padding-left: 14px;
  background: #fff;
  font-size: 18px;
  color: #333;
}

.search svg {
  width: 20px;
  height: 20px;
}

.task-item {
  width: 62px;
  height: 100%;
  flex: none;
  position: relative;
  display: flex;
  align-items: center;
  justify-content: center;
}

.task-item svg {
  width: 26px;
  height: 26px;
}

.task-item.view-btn svg {
  width: 20px;
  height: 22px;
}

.task-item.active {
  background: #e6edf3;
  border-bottom: 3px solid #20a8b8;
}

.task-item.edge::after {
  content: "";
  position: absolute;
  left: 7px;
  right: 4px;
  bottom: 0;
  height: 3px;
  background: #20a8b8;
}

.task-item .task-snow {
  color: #5f95bd;
}

.app-l {
  width: 30px;
  height: 30px;
  display: flex;
  align-items: center;
  justify-content: center;
  font-size: 24px;
  font-weight: 700;
  color: #fff;
  background: #1e9ad0;
}

.app-o {
  width: 30px;
  height: 30px;
  display: flex;
  align-items: center;
  justify-content: center;
  background: #0fb5c4;
}

.app-o::after {
  content: "";
  width: 11px;
  height: 15px;
  border: 1px solid #5ed8e8;
  border-radius: 50%;
}

.tray {
  margin-left: auto;
  height: 100%;
  display: flex;
  align-items: center;
  padding-right: 20px;
  color: #222;
}

.weather {
  width: 30px;
  height: 38px;
  margin-right: 10px;
}

.weather-text {
  width: 173px;
  font-size: 17px;
  white-space: nowrap;
}

.tray-ico {
  width: 29px;
  display: flex;
  justify-content: center;
}

.tray-ico svg {
  width: 18px;
  height: 18px;
}

.tray-ico.chevron {
  width: 31px;
}

.lang {
  width: 29px;
  margin-left: 11px;
  font-size: 13px;
  white-space: nowrap;
}

.clock {
  width: 80px;
  margin-left: 14px;
  display: flex;
  flex-direction: column;
  align-items: center;
  gap: 5px;
  font-size: 13.500px;
  line-height: 19px;
}

.notif {
  width: 41px;
  margin-left: 11px;
  display: flex;
  justify-content: center;
}

.notif svg {
  width: 20px;
  height: 20px;
}
```
